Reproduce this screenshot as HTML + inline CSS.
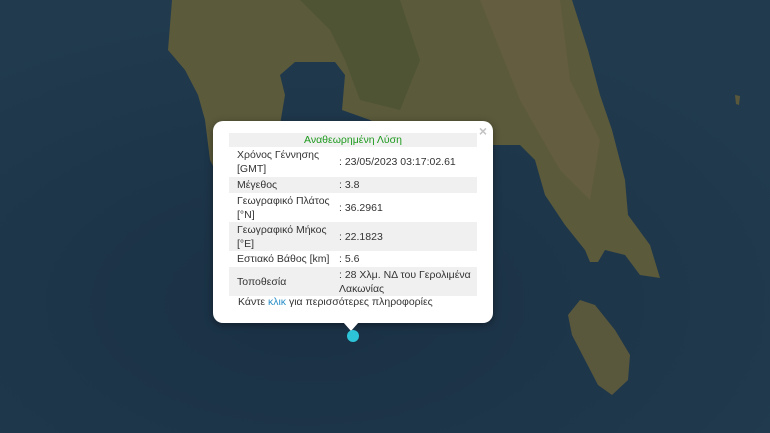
<!DOCTYPE html>
<html><head><meta charset="utf-8"><style>
html,body{margin:0;padding:0;width:770px;height:433px;overflow:hidden;background:#1d3447;font-family:"Liberation Sans",sans-serif}
svg{position:absolute;left:0;top:0}
.pop{position:absolute;left:213px;top:121px;width:280px;height:202px;background:#fff;border-radius:10px;box-shadow:0 2px 8px rgba(0,0,0,.4)}
.tip{position:absolute;left:343px;top:322px;width:0;height:0;border-left:8px solid transparent;border-right:8px solid transparent;border-top:9px solid #fff}
.x{position:absolute;right:6px;top:2px;color:#c3c3c3;font-size:14px;font-weight:bold}
table{position:absolute;left:16px;top:12px;width:248px;border-collapse:collapse;table-layout:fixed;font-size:10.5px;color:#333;line-height:14px}
td{padding:0 0 0 8px;vertical-align:middle;white-space:nowrap;overflow:hidden}
td.v{padding-left:2px}
tr.g td{background:#f0f0f0}
.h td{text-align:center;color:#1d9a1d;padding:0}
.f{position:absolute;left:25px;top:175px;font-size:10.5px;color:#333}
.f span{color:#2a8fc7}
.dot{position:absolute;left:347px;top:330px;width:12px;height:12px;border-radius:50%;background:#2cc4d6}
</style></head><body>
<svg width="770" height="433">
<defs><radialGradient id="s" cx="40%" cy="70%" r="70%"><stop offset="0" stop-color="#1a3145"/><stop offset="1" stop-color="#213a4e"/></radialGradient></defs>
<rect width="770" height="433" fill="url(#s)"/>
<path d="M172,0 L168,50 L185,70 L198,95 L205,120 L210,160 L215,170 L280,125 L285,95 L280,75 L295,62 L335,62 L345,75 L342,110 L370,120 L400,135 L480,145 L520,145 L535,160 L545,195 L565,225 L585,250 L590,262 L598,262 L605,250 L625,255 L640,275 L660,278 L650,245 L628,215 L625,180 L612,130 L600,95 L588,50 L572,0 Z" fill="#5b5a3b"/>
<path d="M300,0 L400,0 L420,60 L400,110 L360,100 L345,60 L330,30 Z" fill="#4a5232" opacity=".7"/>
<path d="M480,0 L560,0 L570,80 L600,140 L590,200 L560,170 L520,100 Z" fill="#6a5f42" opacity=".6"/>
<path d="M580,300 L595,305 L615,330 L630,355 L628,380 L612,395 L598,385 L585,360 L572,335 L568,315 Z" fill="#5a583c"/>
<path d="M735,95 L740,96 L739,105 L736,104 Z" fill="#5a583c"/>
</svg>
<div class="pop">
<div class="x">×</div>
<table>
<colgroup><col style="width:108px"><col style="width:140px"></colgroup>
<tr class="g h"><td colspan="2" style="height:14px">Αναθεωρημένη Λύση</td></tr>
<tr><td style="height:30px">Χρόνος Γέννησης<br>[GMT]</td><td class="v">: 23/05/2023 03:17:02.61</td></tr>
<tr class="g"><td style="height:16px">Μέγεθος</td><td class="v">: 3.8</td></tr>
<tr><td style="height:29px">Γεωγραφικό Πλάτος<br>[°N]</td><td class="v">: 36.2961</td></tr>
<tr class="g"><td style="height:29px">Γεωγραφικό Μήκος<br>[°E]</td><td class="v">: 22.1823</td></tr>
<tr><td style="height:16px">Εστιακό Βάθος [km]</td><td class="v">: 5.6</td></tr>
<tr class="g"><td style="height:29px">Τοποθεσία</td><td class="v">: 28 Χλμ. ΝΔ του Γερολιμένα<br>Λακωνίας</td></tr>
</table>
<div class="f">Κάντε <span>κλικ</span> για περισσότερες πληροφορίες</div>
</div>
<div class="tip"></div>
<div class="dot"></div>
</body></html>
